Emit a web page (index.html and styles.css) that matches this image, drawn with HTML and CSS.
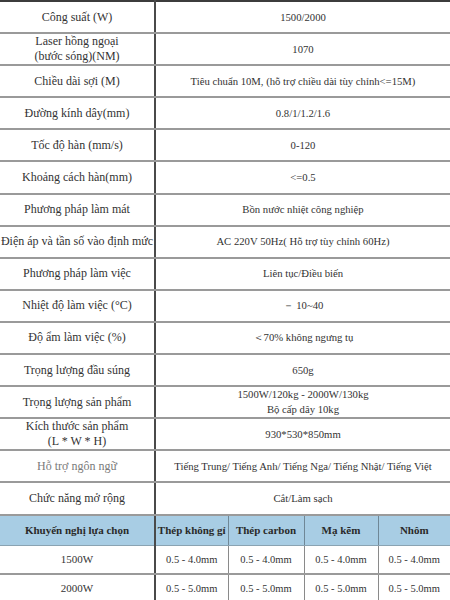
FILE: index.html
```html
<!DOCTYPE html>
<html lang="vi">
<head>
<meta charset="utf-8">
<link rel="stylesheet" href="styles.css">
</head>
<body>
<table class="spec">
  <colgroup><col class="c-label"><col class="c-value"></colgroup>
  <tbody>
    <tr><td class="lbl">Công suất (W)</td><td class="val">1500/2000</td></tr>
    <tr><td class="lbl">Laser hồng ngoại<br>(bước sóng)(NM)</td><td class="val">1070</td></tr>
    <tr><td class="lbl">Chiều dài sợi (M)</td><td class="val">Tiêu chuẩn 10M, (hỗ trợ chiều dài tùy chỉnh&lt;=15M)</td></tr>
    <tr><td class="lbl">Đường kính dây(mm)</td><td class="val">0.8/1/1.2/1.6</td></tr>
    <tr><td class="lbl">Tốc độ hàn (mm/s)</td><td class="val">0-120</td></tr>
    <tr><td class="lbl">Khoảng cách hàn(mm)</td><td class="val">&lt;=0.5</td></tr>
    <tr><td class="lbl">Phương pháp làm mát</td><td class="val">Bồn nước nhiệt công nghiệp</td></tr>
    <tr><td class="lbl">Điện áp và tần số vào định mức</td><td class="val">AC 220V 50Hz( Hỗ trợ tùy chỉnh 60Hz)</td></tr>
    <tr><td class="lbl">Phương pháp làm việc</td><td class="val">Liên tục/Điều biến</td></tr>
    <tr><td class="lbl">Nhiệt độ làm việc (°C)</td><td class="val">－ 10~40</td></tr>
    <tr><td class="lbl">Độ ẩm làm việc (%)</td><td class="val">＜70% không ngưng tụ</td></tr>
    <tr><td class="lbl">Trọng lượng đầu súng</td><td class="val">650g</td></tr>
    <tr><td class="lbl">Trọng lượng sản phẩm</td><td class="val">1500W/120kg - 2000W/130kg<br>Bộ cấp dây 10kg</td></tr>
    <tr><td class="lbl">Kích thước sản phẩm<br>(L * W * H)</td><td class="val">930*530*850mm</td></tr>
    <tr><td class="lbl muted">Hỗ trợ ngôn ngữ</td><td class="val">Tiếng Trung/ Tiếng Anh/ Tiếng Nga/ Tiếng Nhật/ Tiếng Việt</td></tr>
    <tr><td class="lbl">Chức năng mở rộng</td><td class="val">Cắt/Làm sạch</td></tr>
  </tbody>
</table>
<table class="rec">
  <colgroup><col class="r0"><col class="r1"><col class="r2"><col class="r3"><col class="r4"></colgroup>
  <thead>
    <tr><th>Khuyến nghị lựa chọn</th><th>Thép không gỉ</th><th>Thép carbon</th><th>Mạ kẽm</th><th>Nhôm</th></tr>
  </thead>
  <tbody>
    <tr><td class="first">1500W</td><td>0.5 - 4.0mm</td><td>0.5 - 4.0mm</td><td>0.5 - 4.0mm</td><td>0.5 - 4.0mm</td></tr>
    <tr><td class="first">2000W</td><td>0.5 - 5.0mm</td><td>0.5 - 5.0mm</td><td>0.5 - 5.0mm</td><td>0.5 - 5.0mm</td></tr>
  </tbody>
</table>
</body>
</html>
```

FILE: styles.css
```css
html, body {
  margin: 0;
  padding: 0;
  background: #ffffff;
}
body {
  width: 450px;
  overflow: hidden;
  font-family: "Liberation Serif", "Times New Roman", serif;
  color: #333333;
}
table {
  width: 450px;
  border-collapse: collapse;
  table-layout: fixed;
}
.spec {
  border-top: 2px solid #3c3c3c;
}
.c-label { width: 155px; }
.c-value { width: 295px; }
.spec tr { height: 32.1px; }
.spec td {
  padding: 0;
  text-align: center;
  vertical-align: middle;
  border-bottom: 2px solid #9a9a9a;
  line-height: 15px;
}
.lbl {
  font-size: 12px;
  border-right: 2px solid #4a4a4a;
  white-space: nowrap;
}
.lbl.muted { color: #7a7a7a; }
.val {
  font-size: 10.7px;
  white-space: nowrap;
}
.r0 { width: 155px; }
.r1 { width: 73px; }
.r2 { width: 76px; }
.r3 { width: 74px; }
.r4 { width: 72px; }
.rec th {
  height: 29px;
  padding: 0;
  background: #a8cde4;
  font-size: 11px;
  font-weight: bold;
  color: #2a2a2a;
  border-right: 1px solid #6f8796;
  border-bottom: 1px solid #8aa3b2;
  white-space: nowrap;
}
.rec th:first-child { border-right: 2px solid #4a4a4a; }
.rec th:last-child { border-right: none; }
.rec td {
  height: 27px;
  padding: 0;
  text-align: center;
  font-size: 10.5px;
  border-right: 1px solid #8a8a8a;
  border-bottom: 2px solid #9a9a9a;
  white-space: nowrap;
}
.rec td.first { border-right: 2px solid #4a4a4a; font-size: 11px; }
.rec td:last-child { border-right: none; }
```
